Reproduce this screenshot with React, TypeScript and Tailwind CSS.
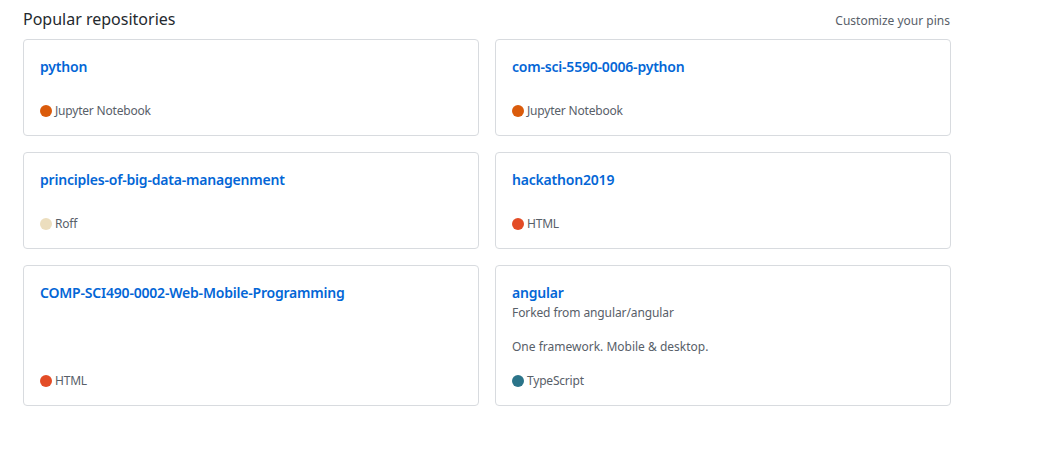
// Pinned repositories grid, GitHub profile style.
type Repo = {
  name: string;
  forkedFrom?: string;
  description?: string;
  language: string;
  color: string;
};

const REPOS: Repo[] = [
  { name: "python", language: "Jupyter Notebook", color: "#da5b0b" },
  { name: "com-sci-5590-0006-python", language: "Jupyter Notebook", color: "#da5b0b" },
  { name: "principles-of-big-data-managenment", language: "Roff", color: "#ecdebe" },
  { name: "hackathon2019", language: "HTML", color: "#e34c26" },
  { name: "COMP-SCI490-0002-Web-Mobile-Programming", language: "HTML", color: "#e34c26" },
  {
    name: "angular",
    forkedFrom: "angular/angular",
    description: "One framework. Mobile & desktop.",
    language: "TypeScript",
    color: "#2b7489",
  },
];

function RepoCard({ repo }: { repo: Repo }) {
  return (
    <div className="flex flex-col rounded-[4px] border border-[#d8dbdf] bg-white p-4">
      <div className="text-[14px] font-semibold leading-[22px] tracking-[-0.2px] text-[#0366d6]">
        {repo.name}
      </div>
      {repo.forkedFrom && (
        <div className="pt-[1px] text-[12px] leading-[16px] tracking-[-0.1px] text-[#586069]">
          Forked from {repo.forkedFrom}
        </div>
      )}
      {repo.description ? (
        <p className="mt-[17px] mb-4 text-[12px] leading-[18px] text-[#586069]">{repo.description}</p>
      ) : (
        <p className="mt-2 mb-4" />
      )}
      <div className="mt-auto flex items-center gap-[3px] text-[12px] leading-[17px] tracking-[-0.2px] text-[#586069]">
        <span className="inline-block h-3 w-3 rounded-full" style={{ backgroundColor: repo.color }} />
        <span>{repo.language}</span>
      </div>
    </div>
  );
}

export default function App() {
  return (
    <div
      className="min-h-screen bg-white pl-[23px] pt-[7px] text-[#24292e]"
      style={{ fontFamily: '"Noto Sans", "Liberation Sans", sans-serif' }}
    >
      <div className="w-[928px]">
        <div className="mb-2 flex items-end justify-between">
          <h2 className="text-[16px] font-normal leading-[24px]">Popular repositories</h2>
          <span className="pr-[1px] pb-[1px] text-[12px] leading-[18px] text-[#586069]">Customize your pins</span>
        </div>
        <div className="grid grid-cols-2 gap-4">
          {REPOS.map((r) => (
            <RepoCard key={r.name} repo={r} />
          ))}
        </div>
      </div>
    </div>
  );
}
